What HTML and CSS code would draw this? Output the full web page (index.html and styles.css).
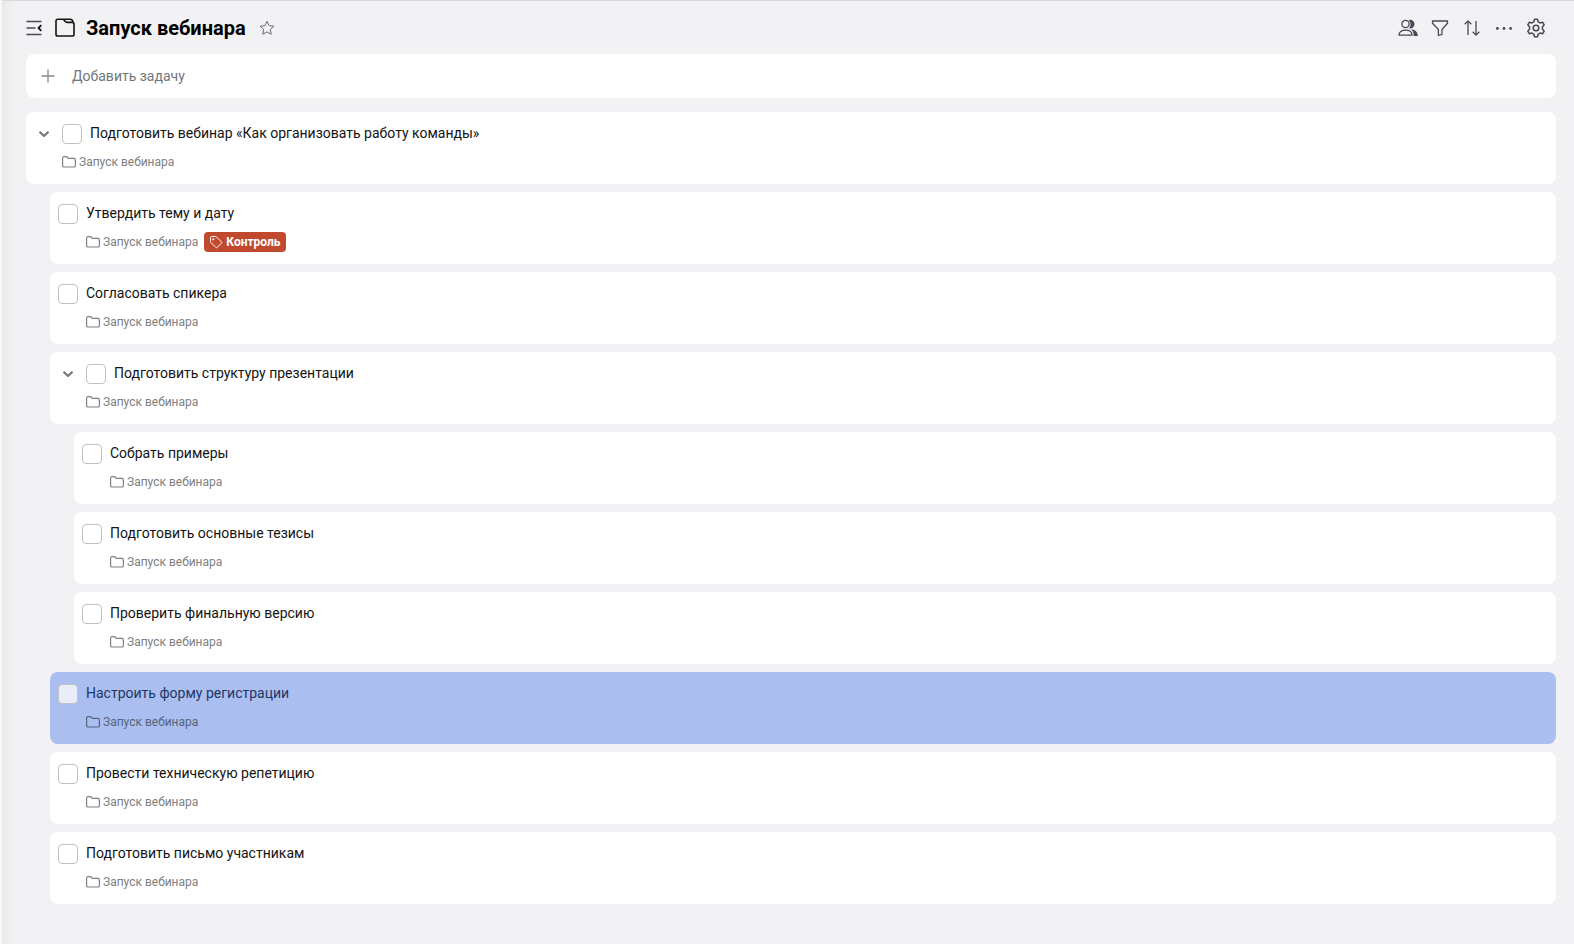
FILE: index.html
```html
<!DOCTYPE html>
<html lang="ru">
<head>
  <meta charset="UTF-8">
  <meta name="viewport" content="width=device-width, initial-scale=1.0">
  <title>Запуск вебинара</title>
  <link rel="stylesheet" href="styles.css">
</head>
<body>

<!-- shared icons -->
<svg class="sprite" aria-hidden="true">
  <symbol id="folder" viewBox="0 0 14 12">
    <path d="M.6 2A1.300 1.300 0 0 1 1.900.7h3l1.300 1.600h5.900a1.300 1.300 0 0 1 1.300 1.300v6.100a1.300 1.300 0 0 1-1.300 1.300H1.900A1.300 1.300 0 0 1 .6 9.700z"/>
  </symbol>
  <symbol id="chevron" viewBox="0 0 12 8">
    <path d="M1.500 1.800 6 6l4.500-4.200"/>
  </symbol>
</svg>

<main class="page">
  <header class="topbar">
    <button class="icon-btn menu" aria-label="Меню">
      <svg width="20" height="20" viewBox="0 0 20 20"><path d="M2.500 3.500h15M2.500 10h9M2.500 16.500h15"/><path class="arrow" d="m17.300 7.200-2.800 2.800 2.800 2.800"/></svg>
    </button>
    <svg class="project-icon" width="20" height="20" viewBox="0 0 20 20"><path d="M1 3a1.800 1.800 0 0 1 1.800-1.800H15c1.800 0 2.900 1.300 3.100 3.200M8.300 1.200l2 2.400c.5.600 1 .8 1.700.8h5.200A1.800 1.800 0 0 1 19 6.200v10a1.800 1.800 0 0 1-1.800 1.800H2.800A1.800 1.800 0 0 1 1 16.200V3"/></svg>
    <h1>Запуск вебинара</h1>
    <button class="icon-btn star" aria-label="В избранное">
      <svg width="16" height="16" viewBox="0 0 16 16"><path d="m8 1.300 2 4.300 4.800.6-3.500 3.200.9 4.800L8 11.900l-4.200 2.300.9-4.800L1.200 6.200 6 5.600z"/></svg>
    </button>
    <div class="tools">
      <button class="icon-btn" aria-label="Участники">
        <svg width="20" height="20" viewBox="0 0 20 20"><circle cx="7.500" cy="6" r="3.600"/><path d="M1 17.200c0-3.200 2.500-5 6.500-5s6.500 1.800 6.500 5z"/><path class="solid" d="M10.500 1.900c3-.9 6 1.100 6 4.200s-2.800 5-5.600 4.300c2.300-2.400 2.300-6-.4-8.500zM13.300 11.300c3.900.4 6.500 3 6.500 6.600H15.600c.2-2.600-.6-4.800-2.300-6.600z"/></svg>
      </button>
      <button class="icon-btn" aria-label="Фильтр">
        <svg width="20" height="20" viewBox="0 0 20 20"><path d="M2.500 3h15v2.300L12 11.500v4.800l-3.600 1.200v-6L2.500 5.300z"/></svg>
      </button>
      <button class="icon-btn" aria-label="Сортировка">
        <svg width="20" height="20" viewBox="0 0 20 20"><path d="M6 17V3M2.700 6.200 6 2.900l3.300 3.300M14 3v14M10.700 13.800l3.300 3.300 3.300-3.300"/></svg>
      </button>
      <button class="icon-btn" aria-label="Ещё">
        <svg width="20" height="20" viewBox="0 0 20 20"><path class="solid" d="M2 10.500a1.400 1.400 0 1 0 2.800 0 1.400 1.400 0 1 0-2.800 0M8.600 10.500a1.400 1.400 0 1 0 2.800 0 1.400 1.400 0 1 0-2.800 0M15.200 10.500a1.400 1.400 0 1 0 2.800 0 1.400 1.400 0 1 0-2.800 0"/></svg>
      </button>
      <button class="icon-btn gear" aria-label="Настройки">
        <svg width="20" height="20" viewBox="0 0 20 20"><circle cx="10" cy="10" r="2.800"/><path d="M8.600 1.300h2.800l.9 2.600 1.700 1 2.700-.6 1.500 2.500-1.800 2.100v2.200l1.800 2.100-1.500 2.500-2.700-.6-1.700 1-.9 2.600H8.600l-.9-2.600-1.700-1-2.700.6-1.500-2.500 1.800-2.100V8.900L1.800 6.800l1.500-2.500 2.700.6 1.700-1z"/></svg>
      </button>
    </div>
  </header>

  <form class="add-task">
    <label for="newTask" aria-label="Добавить задачу">
      <svg width="14" height="14" viewBox="0 0 14 14"><path d="M7 .5v13M.5 7h13"/></svg>
    </label>
    <input type="text" id="newTask" placeholder="Добавить задачу">
  </form>

  <ul class="tasks">
    <li class="task">
      <div class="task-head">
        <button class="toggle" aria-label="Свернуть"><svg><use href="#chevron"/></svg></button>
        <input type="checkbox" id="t1"><label for="t1">Подготовить вебинар «Как организовать работу команды»</label>
      </div>
      <div class="task-meta"><a href="#"><svg><use href="#folder"/></svg>Запуск вебинара</a></div>
    </li>
    <li class="task level-2">
      <div class="task-head">
        <input type="checkbox" id="t2"><label for="t2">Утвердить тему и дату</label>
      </div>
      <div class="task-meta">
        <a href="#"><svg><use href="#folder"/></svg>Запуск вебинара</a>
        <span class="tag"><svg width="14" height="14" viewBox="0 0 14 14"><path d="M1.500 2.500a1 1 0 0 1 1-1h3.800a2 2 0 0 1 1.400.6l4.700 4.700a1 1 0 0 1 0 1.400l-4.200 4.200a1 1 0 0 1-1.400 0L2.100 7.700a2 2 0 0 1-.6-1.400z"/><circle cx="4.300" cy="4.300" r=".7"/></svg>Контроль</span>
      </div>
    </li>
    <li class="task level-2">
      <div class="task-head">
        <input type="checkbox" id="t3"><label for="t3">Согласовать спикера</label>
      </div>
      <div class="task-meta"><a href="#"><svg><use href="#folder"/></svg>Запуск вебинара</a></div>
    </li>
    <li class="task level-2">
      <div class="task-head">
        <button class="toggle" aria-label="Свернуть"><svg><use href="#chevron"/></svg></button>
        <input type="checkbox" id="t4"><label for="t4">Подготовить структуру презентации</label>
      </div>
      <div class="task-meta"><a href="#"><svg><use href="#folder"/></svg>Запуск вебинара</a></div>
    </li>
    <li class="task level-3">
      <div class="task-head">
        <input type="checkbox" id="t5"><label for="t5">Собрать примеры</label>
      </div>
      <div class="task-meta"><a href="#"><svg><use href="#folder"/></svg>Запуск вебинара</a></div>
    </li>
    <li class="task level-3">
      <div class="task-head">
        <input type="checkbox" id="t6"><label for="t6">Подготовить основные тезисы</label>
      </div>
      <div class="task-meta"><a href="#"><svg><use href="#folder"/></svg>Запуск вебинара</a></div>
    </li>
    <li class="task level-3">
      <div class="task-head">
        <input type="checkbox" id="t7"><label for="t7">Проверить финальную версию</label>
      </div>
      <div class="task-meta"><a href="#"><svg><use href="#folder"/></svg>Запуск вебинара</a></div>
    </li>
    <li class="task level-2 selected">
      <div class="task-head">
        <input type="checkbox" id="t8"><label for="t8">Настроить форму регистрации</label>
      </div>
      <div class="task-meta"><a href="#"><svg><use href="#folder"/></svg>Запуск вебинара</a></div>
    </li>
    <li class="task level-2">
      <div class="task-head">
        <input type="checkbox" id="t9"><label for="t9">Провести техническую репетицию</label>
      </div>
      <div class="task-meta"><a href="#"><svg><use href="#folder"/></svg>Запуск вебинара</a></div>
    </li>
    <li class="task level-2">
      <div class="task-head">
        <input type="checkbox" id="t10"><label for="t10">Подготовить письмо участникам</label>
      </div>
      <div class="task-meta"><a href="#"><svg><use href="#folder"/></svg>Запуск вебинара</a></div>
    </li>
  </ul>
</main>

</body>
</html>
```

FILE: styles.css
```css
* { box-sizing: border-box; }
body {
  font-family: Roboto, Arial, sans-serif;
  margin: 0; padding-left: 2px;
  background: #f8f8f9; color: #141414;
}
button { background: none; border: none; padding: 0; cursor: pointer; }
svg { fill: none; stroke: currentColor; flex-shrink: 0; stroke-linejoin: round; }
.sprite { display: none; }
.solid { fill: currentColor; stroke: none; }

.page {
  min-height: 100vh;
  padding: 0 18px 24px 24px;
  border-top: 1px solid #d8d8dc;
  background: linear-gradient(to right, #e8e8eb, #f2f2f4 12px);
}

/* header */
.topbar { display: flex; align-items: center; height: 53px; }
.icon-btn {
  display: flex; align-items: center; justify-content: center;
  width: 16px; height: 32px; color: #4a4854;
}
.icon-btn svg { stroke-width: 1.3; }
.menu svg { stroke-width: 1.6; }
.menu .arrow { color: #141414; stroke-width: 1.8; }
.project-icon { margin: 0 11px 0 13px; color: #141414; stroke-width: 1.6; }
.topbar h1 { margin: 0; font-size: 20px; line-height: 24px; font-weight: 700; color: #000; }
.star { margin-left: 13px; color: #6a6972; }
.star svg { stroke-width: 1; }
.gear svg { stroke-width: 1.5; }
.tools { display: flex; gap: 12px; margin: 0 10px 0 auto; }
.tools .icon-btn { width: 20px; }

/* new task */
.add-task {
  display: flex; align-items: center; gap: 16px;
  height: 44px; padding: 0 15px; margin-bottom: 14px;
  background: #fff; border-radius: 8px;
}
.add-task label { display: flex; color: #85858e; }
.add-task label svg { stroke-width: 1.3; }
.add-task input {
  flex: 1; border: none; outline: none; padding: 0 1px;
  font: 14px/20px Roboto, Arial, sans-serif; background: none;
}
.add-task input::placeholder { color: #6f777b; opacity: 1; }

/* task list */
.tasks { display: grid; gap: 8px; margin: 0; padding: 0; list-style: none; }
.task { min-height: 72px; padding: 12px 8px; background: #fff; border-radius: 8px; }
.level-2 { margin-left: 24px; }
.level-3 { margin-left: 48px; }
.task-head { display: flex; align-items: center; height: 20px; }
.task-head label { margin-left: 8px; font-size: 14px; line-height: 18px; padding-bottom: 2px; }
.task-head input {
  appearance: none;
  width: 20px; height: 20px; margin: 0;
  border: 1px solid #bfc1c3; border-radius: 4px; background: #fff;
}
.toggle { display: flex; justify-content: center; width: 20px; margin-right: 8px; color: #707070; }
.toggle svg { width: 12px; height: 8px; stroke-width: 2; }
.task-meta {
  display: flex; align-items: center; gap: 6px;
  height: 20px; margin: 8px 0 0 28px;
  font-size: 12px; line-height: 16px;
}
.task-meta a { display: flex; align-items: center; gap: 3px; color: #808080; text-decoration: none; }
.task-meta a svg { width: 14px; height: 12px; stroke-width: 1.2; }
.tag {
  display: flex; align-items: center; gap: 3px;
  height: 20px; padding: 0 5px;
  background: #c1492e; color: #fff;
  border-radius: 4px; font-weight: 700;
}
.selected { background: #aabff0; color: #1f3566; }
.selected .task-head input { background: #e9edfa; }
.selected .task-meta a { color: #56627e; }
```
